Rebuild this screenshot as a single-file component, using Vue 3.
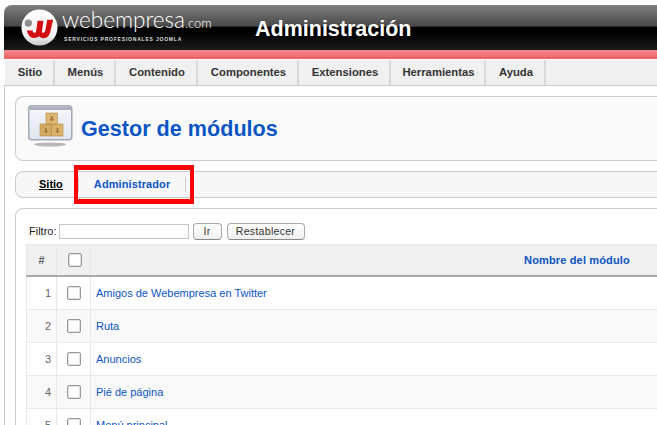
<script setup>
const menuItems = [
  { label: 'Sitio', width: 51 },
  { label: 'Menús', width: 61 },
  { label: 'Contenido', width: 82 },
  { label: 'Componentes', width: 101 },
  { label: 'Extensiones', width: 92 },
  { label: 'Herramientas', width: 95 },
  { label: 'Ayuda', width: 60 },
];

const modules = ['Amigos de Webempresa en Twitter', 'Ruta', 'Anuncios', 'Pié de página', 'Menú principal'];
</script>

<template>
  <div class="page">
    <header class="header">
      <div class="logo">
        <svg class="logo-mark" width="37" height="37" viewBox="0 0 38 38">
          <defs>
            <linearGradient id="ball" x1="0" y1="0" x2="0" y2="1">
              <stop offset="0" stop-color="#ffffff" />
              <stop offset="0.7" stop-color="#f4f4f4" />
              <stop offset="1" stop-color="#c9c9c9" />
            </linearGradient>
          </defs>
          <circle cx="19" cy="19" r="18.500" fill="url(#ball)" />
          <circle cx="7.500" cy="14.500" r="3.800" fill="#8f8f8f" />
          <path d="M6 22 L12 22 C12 25 15 25 15.500 23 L17 12 L23 12 L21.500 23 C21.500 25 24 25 25 22 L27 11 L33 11 L30 24 C28.500 30 23 32 18.500 28 C15 31 8 31 6 22 Z" fill="#d40d12" />
        </svg>
        <div class="logo-text">
          <div class="logo-name">webempresa<span class="logo-com">.com</span></div>
          <div class="logo-tag">SERVICIOS PROFESIONALES JOOMLA</div>
        </div>
      </div>
      <div class="site-title">Administración</div>
    </header>
    <div class="red-bar"></div>

    <nav class="menu">
      <div v-for="item in menuItems" :key="item.label" class="menu-item" :style="{ width: item.width + 'px' }">{{ item.label }}</div>
    </nav>

    <main class="content">
      <section class="panel title-panel">
        <svg class="title-icon" width="48" height="48" viewBox="0 0 48 48">
          <defs>
            <linearGradient id="win" x1="0" y1="0" x2="0" y2="1">
              <stop offset="0" stop-color="#f6f8fb" />
              <stop offset="1" stop-color="#dfe5ee" />
            </linearGradient>
          </defs>
          <ellipse cx="22" cy="39.500" rx="16" ry="2" fill="#b8b8b8" />
          <rect x="0.750" y="0.750" width="43" height="34" rx="3" fill="url(#win)" stroke="#a4a9b3" stroke-width="1.500" />
          <rect x="1.500" y="1.500" width="41.500" height="3.500" fill="#adb2bc" />
          <rect x="12" y="19" width="11.500" height="12" fill="#d3aa62" stroke="#b48b45" stroke-width="0.600" />
          <rect x="23.500" y="19" width="11.500" height="12" fill="#d9b26b" stroke="#b48b45" stroke-width="0.600" />
          <rect x="18" y="8" width="11.500" height="11" fill="#dcb874" stroke="#b48b45" stroke-width="0.600" />
          <path d="M17 23h2v3h1.500l-2.500 2.500l-2.500-2.500h1.500zM28.500 23h2v3h1.500l-2.500 2.500l-2.500-2.500h1.500zM22.750 11h2v3h1.500l-2.500 2.500l-2.500-2.500h1.500z" fill="#a57c3a" />
        </svg>
        <h1 class="page-title">Gestor de módulos</h1>
      </section>

      <section class="panel tabs-panel">
        <a class="tab tab-site">Sitio</a>
        <a class="tab tab-admin">Administrador</a>
      </section>

      <section class="panel table-panel">
        <div class="filter">
          <label class="filter-label">Filtro:</label>
          <input class="filter-input" type="text" />
          <button class="btn btn-go">Ir</button>
          <button class="btn btn-reset">Restablecer</button>
        </div>
        <div class="grid">
          <div class="grid-row grid-head">
            <div class="cell cell-num">#</div>
            <div class="cell cell-check"><span class="check"></span></div>
            <div class="cell cell-name">Nombre del módulo</div>
          </div>
          <div v-for="(name, i) in modules" :key="name" class="grid-row" :class="{ odd: i % 2 === 1 }">
            <div class="cell cell-num">{{ i + 1 }}</div>
            <div class="cell cell-check"><span class="check"></span></div>
            <div class="cell cell-link"><a>{{ name }}</a></div>
          </div>
        </div>
      </section>
    </main>

    <div class="highlight"></div>
  </div>
</template>

<style>
html, body {
  margin: 0;
  background: #fff;
  overflow: hidden;
}
</style>

<style scoped>
.page {
  position: relative;
  width: 657px;
  height: 425px;
  overflow: hidden;
  padding: 5px 0 0 4px;
  box-sizing: border-box;
  background: #fff;
  font-family: "Liberation Sans", Arial, sans-serif;
}

.header {
  height: 45px;
  display: flex;
  align-items: flex-start;
  border-radius: 8px 0 0 0;
  background: linear-gradient(#7f7f7f 0, #484848 47%, #000 49%, #000 60%, #1b1b1b 100%);
}

.logo {
  display: flex;
  margin: 4px 0 0 17px;
  width: 234px;
}

.logo-mark {
  flex: none;
}

.logo-text {
  margin-left: 4px;
  color: #fff;
}

.logo-name {
  font-family: Lato, sans-serif;
  font-weight: 300;
  font-size: 22.500px;
  line-height: 22px;
  white-space: nowrap;
}

.logo-com {
  font-size: 13px;
  line-height: 1;
}

.logo-tag {
  font-size: 5px;
  font-weight: bold;
  letter-spacing: 0.800px;
  line-height: 8px;
  margin: 4px 0 0 2px;
  white-space: nowrap;
  color: #ddd;
}

.site-title {
  color: #fff;
  font-size: 21.500px;
  font-weight: bold;
  line-height: 24px;
  margin-top: 12px;
}

.red-bar {
  height: 9px;
  background: linear-gradient(#f58c8c, #ee5f5f);
}

.menu {
  display: flex;
  background: #f0f0f0;
  border-bottom: 1px solid #ccc;
  border-top: 1px solid #fff;
  height: 25px;
}

.menu-item {
  box-sizing: border-box;
  border-right: 2px solid #d8d8d8;
  text-align: center;
  font-size: 11.300px;
  font-weight: bold;
  line-height: 25px;
  color: #333;
  padding-left: 2px;
}

.menu-item:first-child {
  border-left: 1px solid #fff;
}

.content {
  border-left: 1px solid #ccc;
  padding: 10px 0 0 10px;
}

.panel {
  border: 1px solid #ccc;
  border-right: none;
  border-radius: 8px 0 0 8px;
  box-sizing: border-box;
}

.title-panel {
  height: 65px;
  background: #fafafa;
  display: flex;
  align-items: center;
  padding-left: 12px;
}

.title-icon {
  flex: none;
}

.page-title {
  margin: 0 0 0 5px;
  color: #0b55c4;
  font-size: 21.600px;
  font-weight: bold;
  line-height: 28px;
}

.tabs-panel {
  height: 27px;
  margin-top: 10px;
  background: #f7f7f7;
  display: flex;
  align-items: center;
  font-size: 11px;
  font-weight: bold;
  padding-bottom: 1px;
}

.tab {
  line-height: 15px;
}

.tab-site {
  margin-left: 23px;
  color: #000;
  text-decoration: underline;
}

.tab-admin {
  margin-left: 15px;
  padding: 0 15px 0 15px;
  color: #0b55c4;
  letter-spacing: 0.100px;
  border-left: 1px solid #ccc;
  border-right: 1px solid #ccc;
}

.table-panel {
  margin-top: 10px;
  height: 300px;
  padding: 12px 0 0 10px;
  border-radius: 8px 0 0 0;
  background: #fff;
}

.filter {
  display: flex;
  align-items: center;
  height: 20px;
  margin-bottom: 3px;
  font-size: 11px;
  color: #222;
  padding-left: 3px;
}

.filter-input {
  width: 130px;
  height: 15px;
  box-sizing: border-box;
  margin: 0 4px 0 2px;
  padding: 0;
  border: 1px solid #c4c4c4;
  background: #fff;
}

.btn {
  height: 17px;
  box-sizing: border-box;
  padding: 0;
  border: 1px solid #aaa;
  border-bottom-color: #888;
  border-radius: 4px;
  background: linear-gradient(#fff, #f0f0f0);
  font-family: "Liberation Sans", Arial, sans-serif;
  font-size: 10.500px;
  letter-spacing: 0.300px;
  color: #333;
}

.btn-go {
  width: 29px;
}

.btn-reset {
  width: 78px;
  margin-left: 5px;
}

.grid {
  width: 1037px;
}

.grid-row {
  display: flex;
  height: 33px;
  box-sizing: border-box;
  border-bottom: 1px solid #e8e8e8;
  font-size: 11px;
}

.grid-row.odd {
  background: #f9f9f9;
}

.grid-head {
  background: #f0f0f0;
  border-top: 1px solid #e8e8e8;
  border-bottom: 2px solid #aaa;
}

.cell {
  display: flex;
  align-items: center;
  box-sizing: border-box;
}

.cell-num {
  width: 31px;
  flex: none;
  justify-content: flex-end;
  padding-right: 5px;
  color: #666;
  border-right: 1px solid #e8e8e8;
  border-left: 1px solid #e8e8e8;
}

.grid-head .cell-num {
  justify-content: center;
  padding-right: 0;
  font-weight: bold;
}

.cell-check {
  width: 34px;
  flex: none;
  justify-content: center;
  border-right: 1px solid #e8e8e8;
}

.grid-head .check {
  margin-left: 2px;
}

.check {
  width: 14px;
  height: 14px;
  box-sizing: border-box;
  border: 1px solid #999;
  border-radius: 2px;
  background: #fff;
  box-shadow: inset 0 0 0 1px #e2e2e2;
}

.cell-name {
  flex: 1;
  justify-content: center;
  color: #0b55c4;
  font-weight: bold;
  letter-spacing: 0.150px;
}

.cell-link {
  flex: 1;
  padding-left: 5px;
  color: #0b55c4;
}

.highlight {
  position: absolute;
  left: 74px;
  top: 165px;
  width: 120px;
  height: 39px;
  box-sizing: border-box;
  border-style: solid;
  border-color: #f00;
  border-width: 5px 4px;
}
</style>
